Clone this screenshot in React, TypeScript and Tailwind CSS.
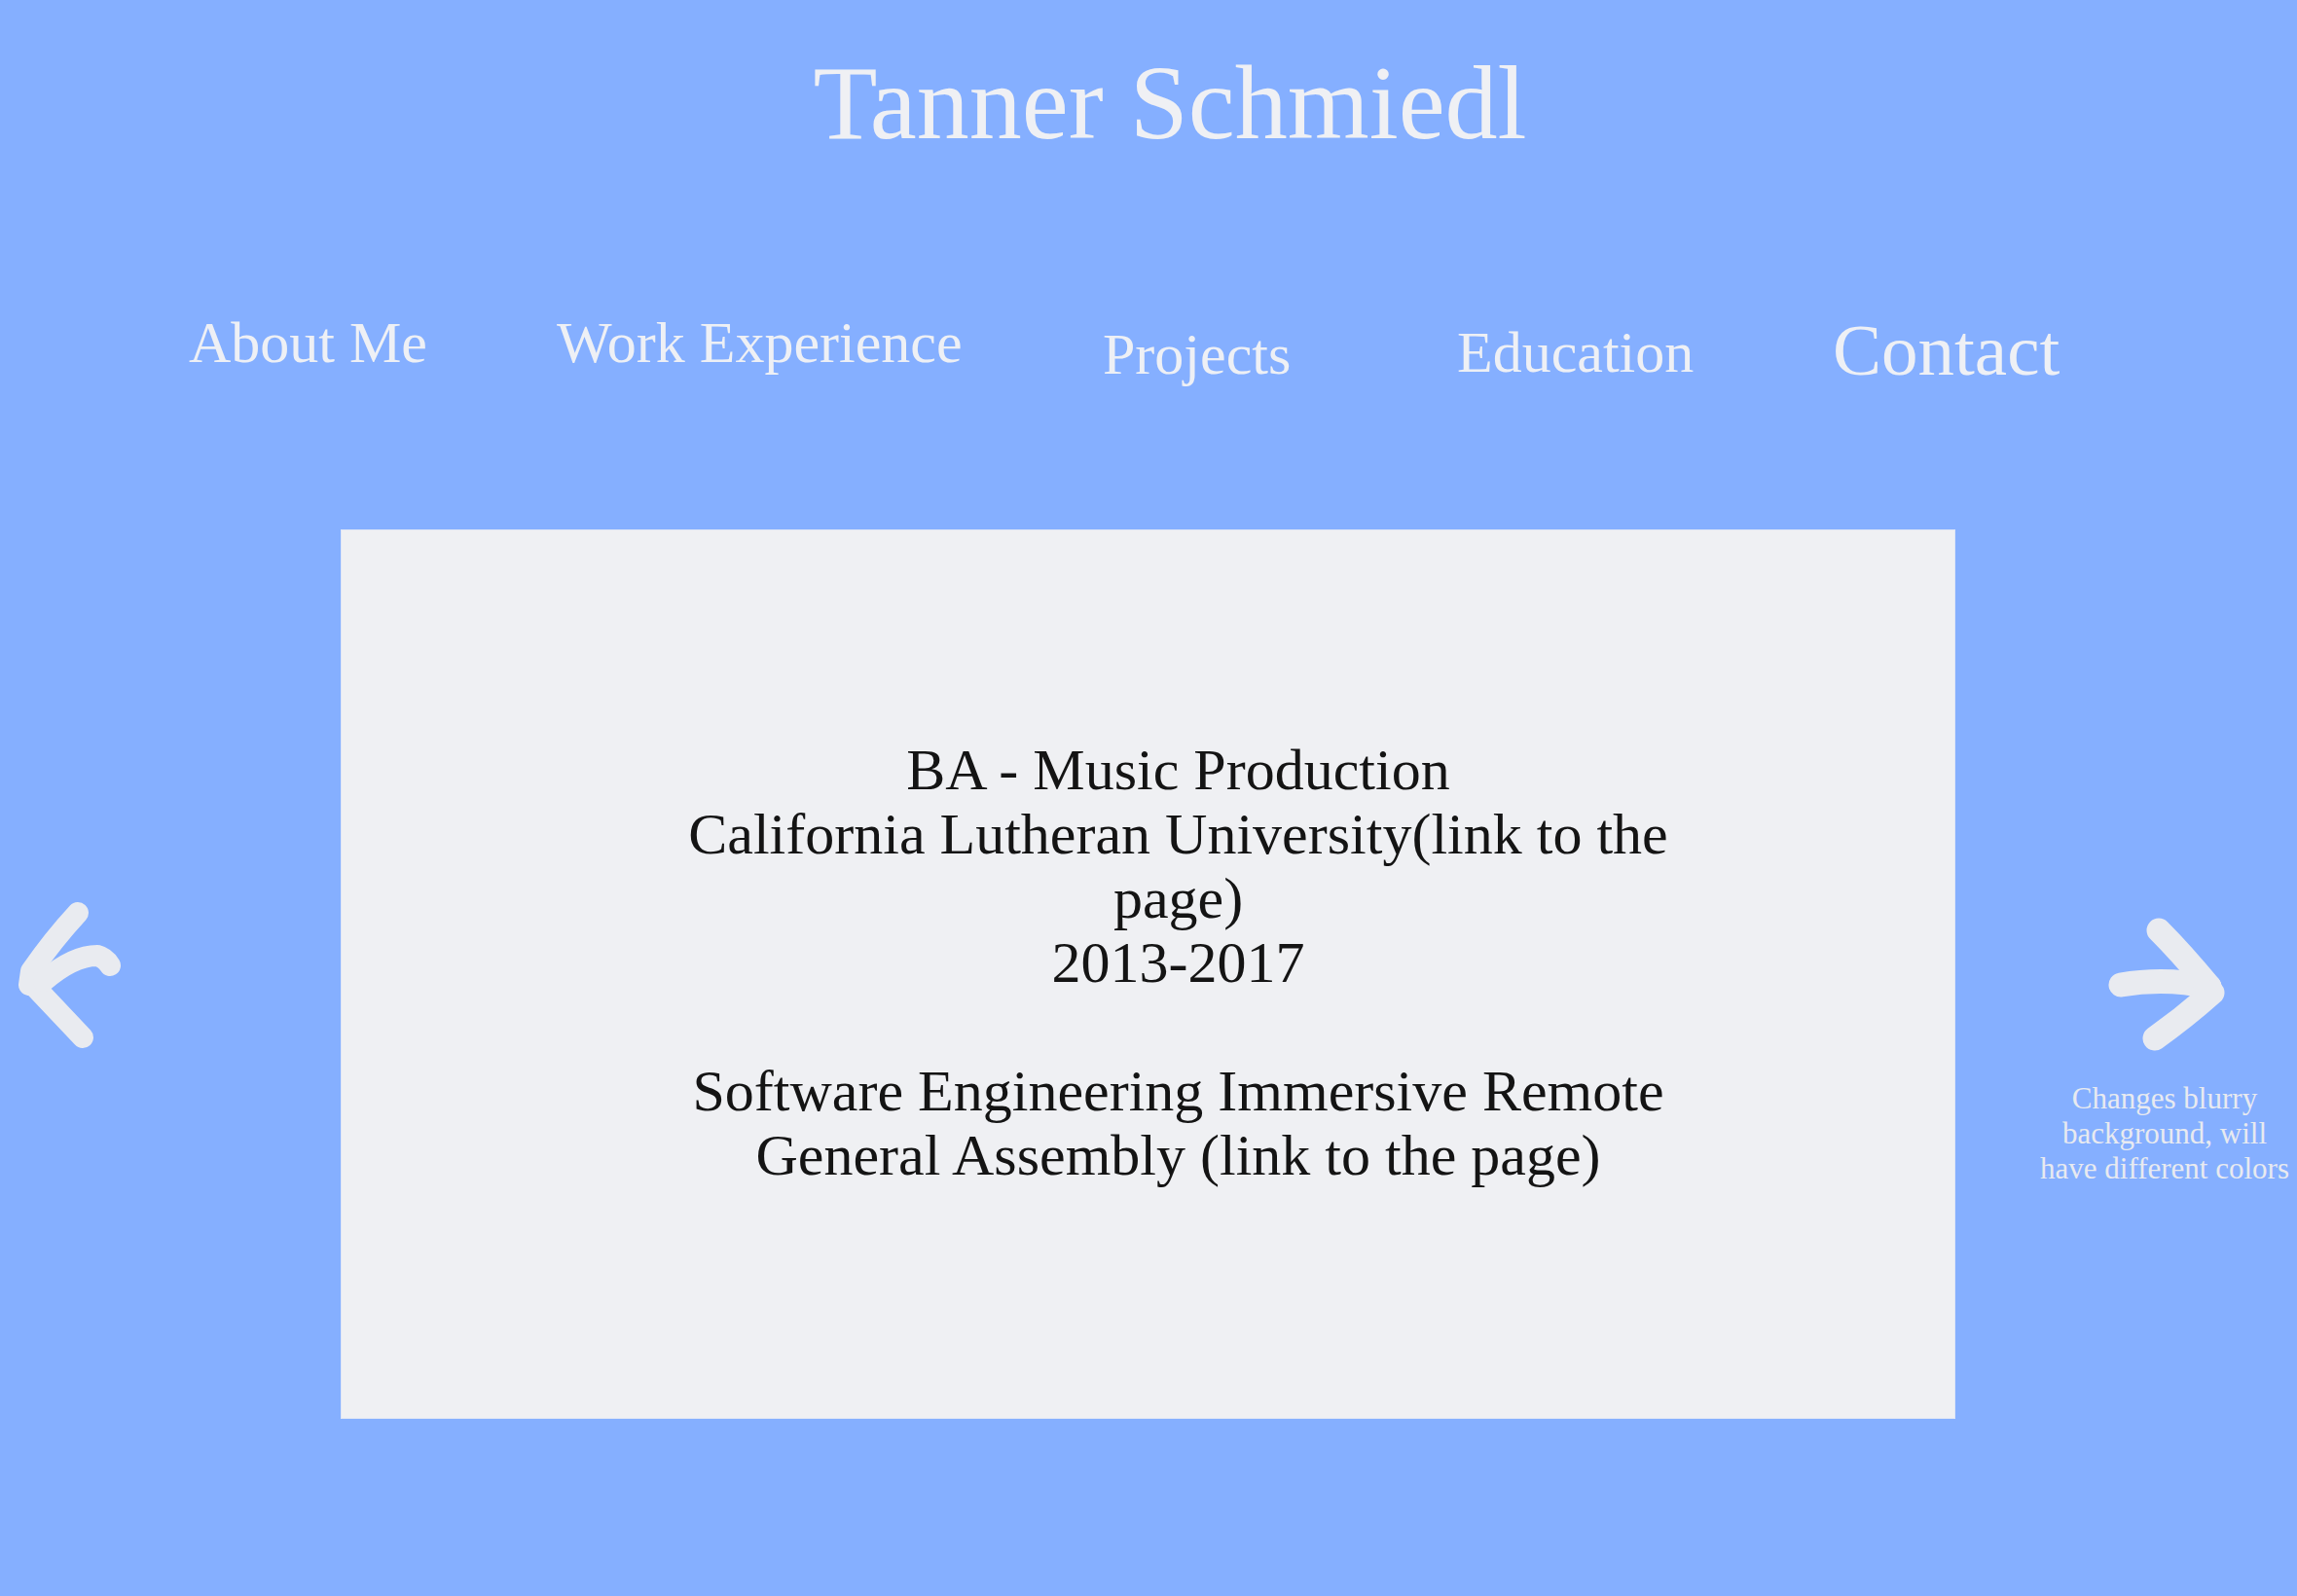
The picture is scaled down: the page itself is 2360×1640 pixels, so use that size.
import React from "react";

const serif = { fontFamily: '"Liberation Serif", "Times New Roman", serif' };

export default function App() {
  return (
    <div className="w-[2360px] h-[1640px] bg-[#85afff] overflow-hidden" style={serif}>
      <div className="h-[544px] flex flex-col">
        <div className="pt-[52px] pl-[44px] text-center text-[108px] leading-none text-[#eff0f4]">
          Tanner Schmiedl
        </div>
        <div className="mt-[162px] flex items-start pl-[194px] text-[#eef0f5] leading-none">
          <div className="w-[378px] text-[60px]">About Me</div>
          <div className="w-[561px] text-[60px]">Work Experience</div>
          <div className="w-[364px] text-[60px] mt-[12px]">Projects</div>
          <div className="w-[386px] text-[60px] mt-[10px]">Education</div>
          <div className="text-[75px]">Contact</div>
        </div>
      </div>
      <div className="flex h-[914px]">
        <div className="w-[350px] shrink-0">
          <svg className="mt-[376px]" width="140" height="160" viewBox="0 0 140 160">
            <g fill="none" stroke="#e9ebf0" strokeWidth="22" strokeLinecap="round" strokeLinejoin="round">
              <path d="M80 18 Q55 45 32 78 L30 92" />
              <path d="M32 90 L85 146" />
              <path d="M45 88 Q75 62 100 62 Q108 64 113 72" />
            </g>
          </svg>
        </div>
        <div className="w-[1659px] shrink-0 bg-[#eff0f3] border border-[#dfe6f5] text-[#141414] text-[60px] leading-[66px] text-center pt-[213px] pl-[62px]">
          <div>BA - Music Production</div>
          <div>California Lutheran University(link to the</div>
          <div>page)</div>
          <div>2013-2017</div>
          <div className="h-[66px]"></div>
          <div>Software Engineering Immersive Remote</div>
          <div>General Assembly (link to the page)</div>
        </div>
        <div className="flex-1 flex flex-col">
          <svg className="mt-[396px] ml-[131px]" width="170" height="150" viewBox="0 0 170 150">
            <g fill="none" stroke="#e9ebf0" strokeWidth="25" strokeLinecap="round" strokeLinejoin="round">
              <path d="M39 72 Q85 64 130 74" />
              <path d="M78 16 Q102 40 130 74" />
              <path d="M74 127 Q105 105 133 80" />
            </g>
          </svg>
          <div className="mt-[21px] ml-[70px] w-[290px] text-center text-[31px] leading-[36px] text-[#e8eaf0]">
            Changes blurry
            <br />
            background, will
            <br />
            have different colors
          </div>
        </div>
      </div>
    </div>
  );
}
